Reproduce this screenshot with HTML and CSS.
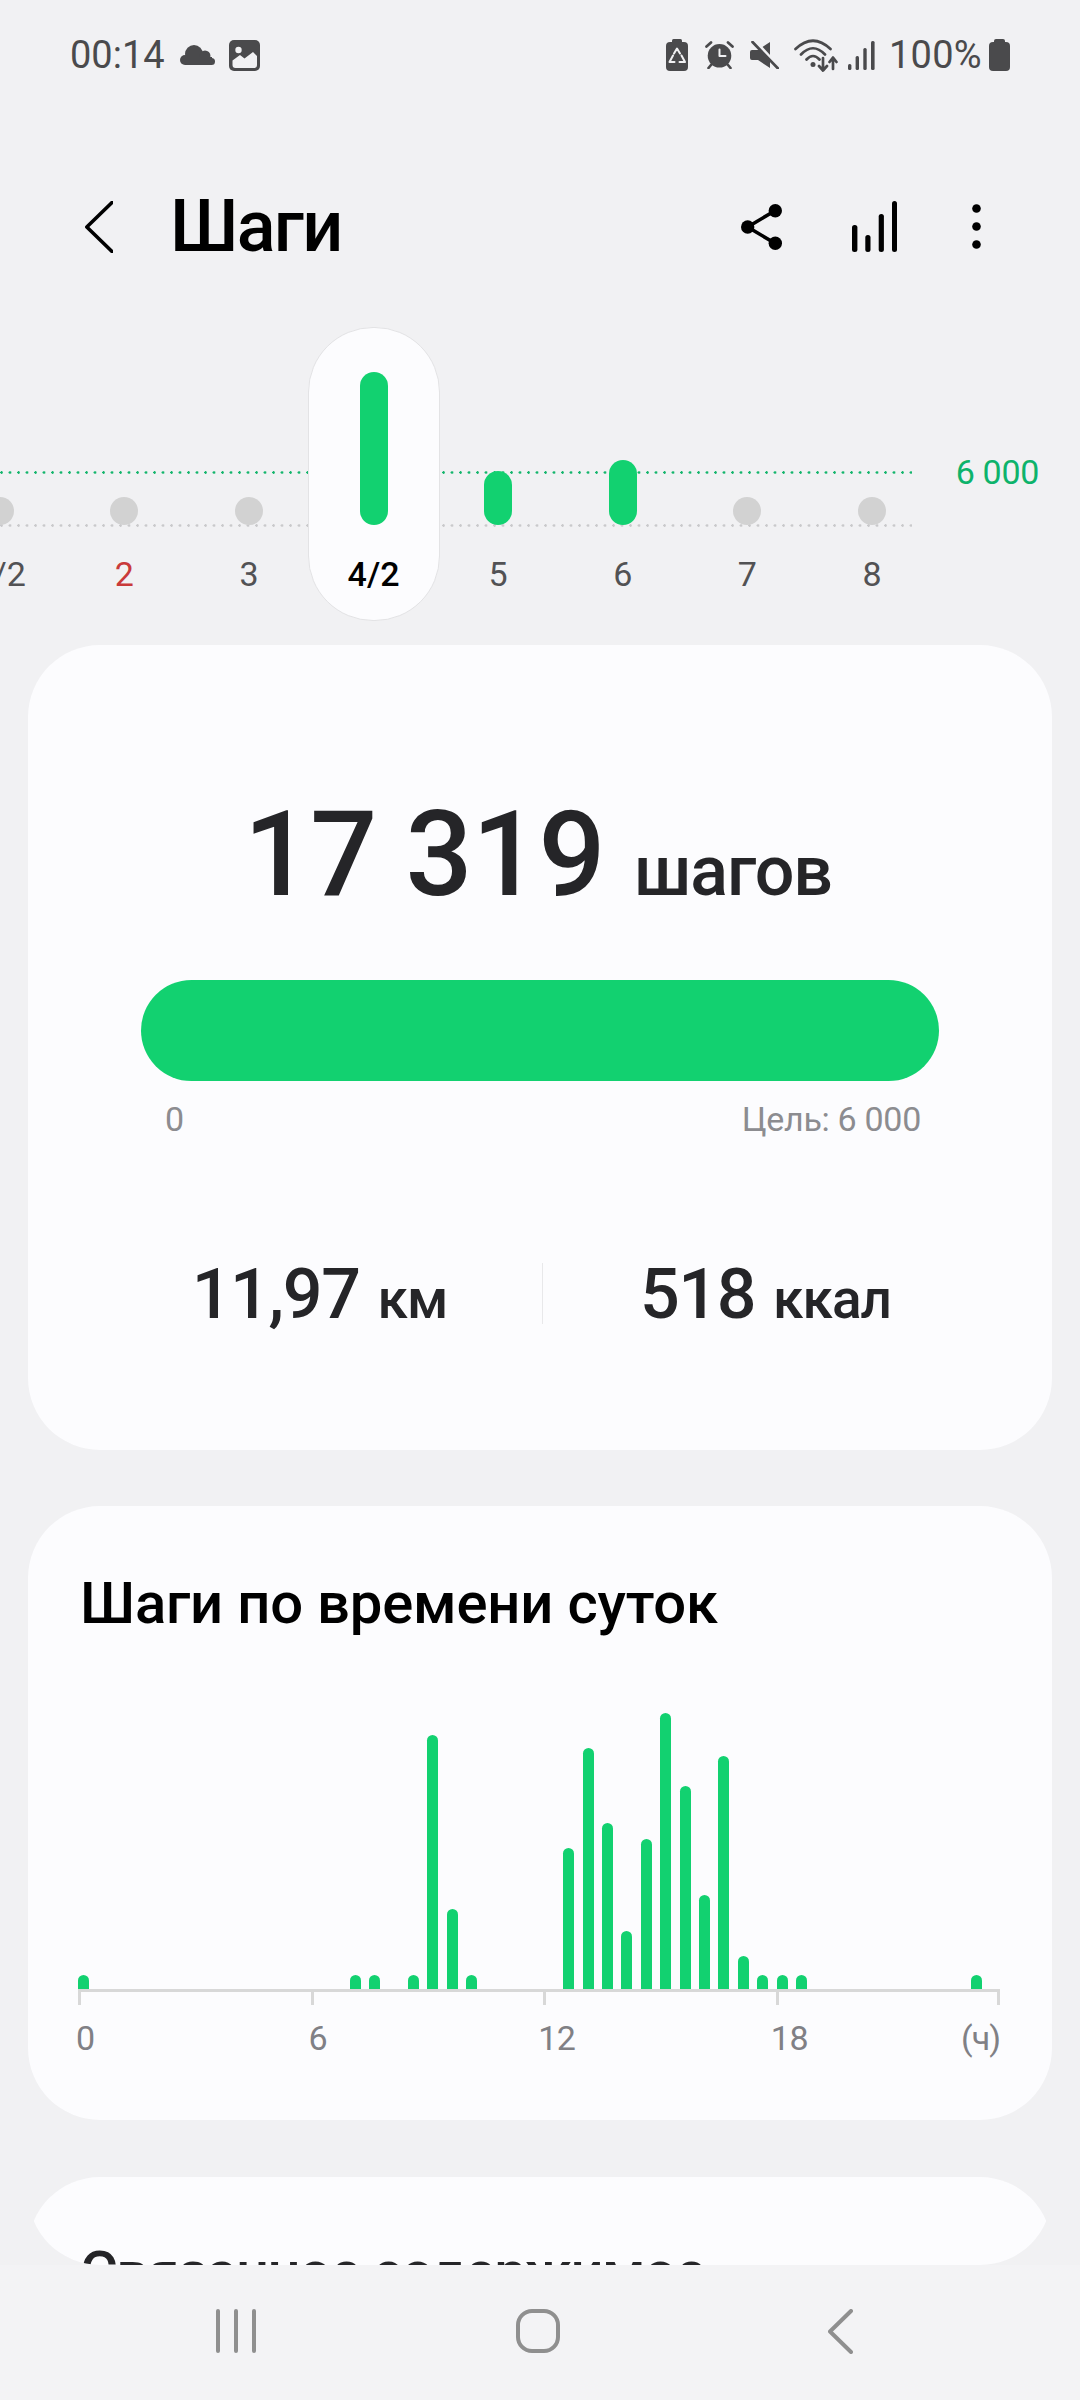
FILE: index.html
```html
<!DOCTYPE html>
<html lang="ru">
<head>
    <meta charset="UTF-8">
    <meta name="viewport" content="width=device-width, initial-scale=1.0">
    <title>Шаги</title>
    <link rel="stylesheet" href="styles.css">
</head>
<body>
    <div class="status-bar">
        <span class="status-time">00:14</span>
        <svg class="ic-cloud" viewBox="0 0 35 20"><circle cx="14" cy="9" r="9"/><circle cx="25" cy="11" r="5.5"/><circle cx="5" cy="15" r="5"/><circle cx="31.5" cy="16.5" r="3.5"/><rect x="5" y="12" width="27" height="8"/></svg>
        <svg class="ic-image" viewBox="0 0 31 31"><rect width="31" height="31" rx="5"/><circle class="cut" cx="9.5" cy="10" r="3.2"/><path class="cut" d="M3.5 20.5L11 15l4.5 3.5L24 12l4 4v9a3 3 0 0 1-3 3H6.500a3 3 0 0 1-3-3z"/></svg>
        <div class="status-right">
            <svg class="ic-recycle" viewBox="0 0 22 32"><rect y="3" width="22" height="29" rx="4"/><rect x="6" width="10" height="6" rx="1.500"/><path class="cut-line" d="M8 14.500l3-5 3 5M15.500 16.500l3.500 6.500h-5.500M8.500 23h-5L7 16.500"/></svg>
            <svg class="ic-alarm" viewBox="0 0 29 28"><circle cx="14.500" cy="14.800" r="11.800"/><path class="cut-line" d="M1 7l6-5.500M28 7l-6-5.500"/><path class="line" d="M1.500 5.500L6 1.500M27.500 5.500L23 1.500M6 24l-2.500 3M23 24l2.500 3"/><path class="cut-line" d="M14.500 8.500v6.500H20.500"/></svg>
            <svg class="ic-mute" viewBox="0 0 29 28"><path d="M0 11q0-2 2-2h6l12-8v26L8 19H2q-2 0-2-2z"/><path class="cut-line wide" d="M5 0l26 28"/><path class="line" d="M2.500 1l25.500 26.500"/></svg>
            <svg class="ic-wifi" viewBox="0 0 44 33"><path class="line" d="M1.500 10Q19-6.500 36.500 10M7 15.500Q19 3 31 15.500M12.500 20.500Q19 13.500 25.500 20.500M29 19v12M25 27l4 4.500 4-4.500M39 30V19M35.500 23l3.500-4.500 3.500 4.500"/><circle cx="19" cy="25.500" r="2.500"/></svg>
            <svg class="ic-signal" viewBox="0 0 27 29"><rect y="23" width="3.400" height="6" rx="1.500"/><rect x="7.600" y="15" width="3.400" height="14" rx="1.500"/><rect x="15.300" y="7" width="3.400" height="22" rx="1.500"/><rect x="23" width="3.600" height="29" rx="1.500"/></svg>
            <span class="status-level">100%</span>
            <svg class="ic-battery" viewBox="0 0 21 32"><rect y="3" width="21" height="29" rx="4"/><rect x="5" width="11" height="6" rx="2"/></svg>
        </div>
    </div>

    <div class="app-bar">
        <svg class="ic-back" viewBox="0 0 28 52"><path d="M27 1.500L1.800 26 27 50.500"/></svg>
        <h1 class="app-title">Шаги</h1>
        <svg class="ic-share" viewBox="0 0 41 46"><path d="M34 6.700L6.700 23 34 39.300"/><circle cx="6.700" cy="23" r="6.700"/><circle cx="34.300" cy="6.700" r="6.700"/><circle cx="34.300" cy="39.300" r="6.700"/></svg>
        <svg class="ic-stats" viewBox="0 0 45 51"><rect y="24" width="5.400" height="27" rx="2.500"/><rect x="13.300" y="34" width="5.200" height="17" rx="2.500"/><rect x="26.700" y="13" width="5.200" height="38" rx="2.500"/><rect x="40" width="5" height="51" rx="2.500"/></svg>
        <svg class="ic-more" viewBox="0 0 9 45"><circle cx="4.500" cy="4.500" r="4.300"/><circle cx="4.500" cy="22.500" r="4.300"/><circle cx="4.500" cy="40.500" r="4.300"/></svg>
    </div>

    <div class="week">
        <div class="week-line goal"></div>
        <div class="week-line base"></div>
        <div class="week-goal">6 000</div>
        <div class="days">
            <div class="day"><div class="day-bars"><div class="day-bar empty" style="height:28px"></div></div><div class="day-label">1/2</div></div>
            <div class="day"><div class="day-bars"><div class="day-bar empty" style="height:28px"></div></div><div class="day-label sunday">2</div></div>
            <div class="day"><div class="day-bars"><div class="day-bar empty" style="height:28px"></div></div><div class="day-label">3</div></div>
            <div class="day selected"><div class="day-bars"><div class="day-bar" style="height:153px"></div></div><div class="day-label">4/2</div></div>
            <div class="day"><div class="day-bars"><div class="day-bar" style="height:54px"></div></div><div class="day-label">5</div></div>
            <div class="day"><div class="day-bars"><div class="day-bar" style="height:65px"></div></div><div class="day-label">6</div></div>
            <div class="day"><div class="day-bars"><div class="day-bar empty" style="height:28px"></div></div><div class="day-label">7</div></div>
            <div class="day"><div class="day-bars"><div class="day-bar empty" style="height:28px"></div></div><div class="day-label">8</div></div>
        </div>
    </div>

    <div class="content">
        <div class="card summary">
            <div class="total">
                <span class="total-value">17 319</span>
                <span class="total-unit">шагов</span>
            </div>
            <div class="progress"></div>
            <div class="progress-labels">
                <span>0</span>
                <span>Цель: 6 000</span>
            </div>
            <div class="stats">
                <div class="stat"><span class="stat-value">11,97</span><span class="stat-unit">км</span></div>
                <div class="stat-divider"></div>
                <div class="stat"><span class="stat-value">518</span><span class="stat-unit">ккал</span></div>
            </div>
        </div>

        <div class="card hourly">
            <h2 class="card-title">Шаги по времени суток</h2>
            <div class="hours">
                <div class="slot"><div class="bar" style="height:14px"></div></div>
                <div class="slot"></div><div class="slot"></div><div class="slot"></div><div class="slot"></div>
                <div class="slot"></div><div class="slot"></div><div class="slot"></div><div class="slot"></div>
                <div class="slot"></div><div class="slot"></div><div class="slot"></div><div class="slot"></div>
                <div class="slot"></div>
                <div class="slot"><div class="bar" style="height:14px"></div></div>
                <div class="slot"><div class="bar" style="height:14px"></div></div>
                <div class="slot"></div>
                <div class="slot"><div class="bar" style="height:14px"></div></div>
                <div class="slot"><div class="bar" style="height:254px"></div></div>
                <div class="slot"><div class="bar" style="height:80px"></div></div>
                <div class="slot"><div class="bar" style="height:14px"></div></div>
                <div class="slot"></div><div class="slot"></div><div class="slot"></div><div class="slot"></div>
                <div class="slot"><div class="bar" style="height:141px"></div></div>
                <div class="slot"><div class="bar" style="height:241px"></div></div>
                <div class="slot"><div class="bar" style="height:166px"></div></div>
                <div class="slot"><div class="bar" style="height:58px"></div></div>
                <div class="slot"><div class="bar" style="height:150px"></div></div>
                <div class="slot"><div class="bar" style="height:276px"></div></div>
                <div class="slot"><div class="bar" style="height:203px"></div></div>
                <div class="slot"><div class="bar" style="height:94px"></div></div>
                <div class="slot"><div class="bar" style="height:233px"></div></div>
                <div class="slot"><div class="bar" style="height:33px"></div></div>
                <div class="slot"><div class="bar" style="height:14px"></div></div>
                <div class="slot"><div class="bar" style="height:14px"></div></div>
                <div class="slot"><div class="bar" style="height:14px"></div></div>
                <div class="slot"></div><div class="slot"></div><div class="slot"></div><div class="slot"></div>
                <div class="slot"></div><div class="slot"></div><div class="slot"></div><div class="slot"></div>
                <div class="slot"><div class="bar" style="height:14px"></div></div>
            </div>
            <div class="axis">
                <div class="axis-cell"><div class="tick"></div><span>0</span></div>
                <div class="axis-cell"><div class="tick"></div><span>6</span></div>
                <div class="axis-cell teen"><div class="tick"></div><span>12</span></div>
                <div class="axis-cell teen last"><div class="tick"></div><span>18</span></div>
                <div class="axis-cell end"><div class="tick"></div><span>(ч)</span></div>
            </div>
        </div>

        <div class="card related">
            <h2 class="card-title">Связанное содержимое</h2>
        </div>
    </div>

    <div class="nav-bar">
        <svg class="nav-recent" viewBox="0 0 40 44"><path d="M2 2v40M20 2v40M38 2v40"/></svg>
        <svg class="nav-home" viewBox="0 0 44 44"><rect x="2" y="2" width="40" height="40" rx="14"/></svg>
        <svg class="nav-back" viewBox="0 0 25 45"><path d="M23 2L2 22.500 23 43"/></svg>
    </div>
</body>
</html>
```

FILE: styles.css
```css
* {
    margin: 0;
    padding: 0;
    box-sizing: border-box;
}

body {
    width: 1080px;
    height: 2400px;
    overflow: hidden;
    background: #f1f1f3;
    font-family: Roboto, "Noto Sans", sans-serif;
    color: #252528;
}

svg {
    display: block;
    flex: none;
}

/* status bar */
.status-bar {
    height: 110px;
    padding: 0 70px 0 70px;
    display: flex;
    align-items: center;
    color: #4a4a4c;
    fill: #4a4a4c;
}

.status-time,
.status-level {
    font-size: 38px;
    line-height: 44px;
}

.status-right {
    margin-left: auto;
    display: flex;
    align-items: center;
}

.status-bar .cut { fill: #f1f1f3; }
.status-bar .line { fill: none; stroke: #4a4a4c; stroke-width: 2.7; stroke-linecap: round; stroke-linejoin: round; }
.status-bar .cut-line { fill: none; stroke: #f1f1f3; stroke-width: 2; stroke-linecap: round; stroke-linejoin: round; }
.status-bar .cut-line.wide { stroke-width: 3; }

.ic-cloud { width: 35px; height: 20px; margin-left: 15px; margin-top: -1px; }
.ic-image { width: 31px; height: 31px; margin-left: 14px; }
.ic-recycle { width: 22px; height: 32px; }
.ic-alarm { width: 29px; height: 28px; margin-left: 17px; }
.ic-mute { width: 29px; height: 28px; margin-left: 16px; }
.ic-wifi { width: 44px; height: 33px; margin-left: 15px; }
.ic-signal { width: 27px; height: 29px; margin-left: 10px; }
.status-level { margin-left: 14px; letter-spacing: 0.3px; }
.ic-battery { width: 21px; height: 32px; margin-left: 7px; }

/* app bar */
.app-bar {
    height: 217px;
    padding: 16px 99px 0 85px;
    display: flex;
    align-items: center;
}

.app-title {
    margin-left: 57px;
    margin-right: auto;
    font-size: 72px;
    font-weight: 500;
    letter-spacing: -1.700px;
    color: #000;
}

.ic-back { width: 28px; height: 52px; }
.ic-back path { fill: none; stroke: #000; stroke-width: 3.600; stroke-linecap: round; stroke-linejoin: round; }
.ic-share { width: 41px; height: 46px; }
.ic-share path { fill: none; stroke: #000; stroke-width: 3.600; }
.ic-stats { width: 45px; height: 51px; margin-left: 70px; }
.ic-more { width: 9px; height: 45px; margin-left: 75px; }

/* week strip */
.week {
    position: relative;
    height: 294px;
}

.week-line {
    position: absolute;
    left: 0;
    width: 912px;
    height: 3px;
    background-size: 8.500px 3px;
}

.week-line.goal {
    top: 144px;
    background-image: radial-gradient(circle at 1.500px 1.500px, #13b56c 1.100px, transparent 1.500px);
}

.week-line.base {
    top: 197px;
    background-image: radial-gradient(circle at 1.500px 1.500px, #c9c9cb 1.100px, transparent 1.500px);
}

.week-goal {
    position: absolute;
    right: 41px;
    top: 125px;
    font-size: 34px;
    line-height: 40px;
    letter-spacing: -0.3px;
    color: #0db36b;
}

.days {
    display: flex;
    margin-left: -62.500px;
}

.day {
    position: relative;
    flex: none;
    width: 124.600px;
    height: 294px;
    display: flex;
    flex-direction: column;
    align-items: center;
}

.day.selected::before {
    content: '';
    position: absolute;
    top: 0;
    bottom: 0;
    left: -3px;
    width: 130px;
    background: #fcfcfe;
    border: 1.500px solid #e3e3e5;
    border-radius: 65px;
}

.day-bars {
    position: relative;
    height: 198px;
    display: flex;
    align-items: flex-end;
}

.day-bar {
    width: 28px;
    background: #12d170;
    border-radius: 14px;
}

.day-bar.empty { background: #d2d2d2; }

.day-label {
    position: relative;
    margin-top: 29px;
    font-size: 34px;
    line-height: 40px;
    color: #525254;
    white-space: nowrap;
}

.day-label.sunday { color: #c93a3a; }
.day.selected .day-label { color: #000; font-weight: 500; }

/* cards */
.content {
    margin: 24px 28px 0;
    height: 1620px;
    overflow: hidden;
    border-radius: 0 0 72px 72px;
}

.card {
    background: #fcfcfe;
    border-radius: 72px;
    margin-bottom: 56px;
}

.summary {
    height: 805px;
    padding-top: 150px;
}

.total {
    display: flex;
    align-items: baseline;
    justify-content: center;
    gap: 29px;
    margin-left: -4px;
    line-height: 120px;
    height: 120px;
    color: #252528;
}

.total-value {
    font-size: 118px;
    font-weight: 500;
    letter-spacing: -0.600px;
}

.total-unit {
    font-size: 70px;
    font-weight: 500;
    letter-spacing: -1px;
}

.progress {
    margin: 65px 0 0 113px;
    width: 798px;
    height: 101px;
    background: #12d170;
    border-radius: 51px;
}

.progress-labels {
    margin: 18px 131px 0 137px;
    display: flex;
    justify-content: space-between;
    font-size: 34px;
    line-height: 40px;
    letter-spacing: -0.3px;
    color: #8c8c90;
}

.stats {
    margin-top: 124px;
    padding: 0 64px 0 69px;
    height: 61px;
    display: flex;
    align-items: center;
}

.stat {
    flex: 1;
    display: flex;
    align-items: baseline;
    justify-content: center;
    gap: 18px;
    white-space: nowrap;
    font-weight: 500;
}

.stat-value { font-size: 70px; letter-spacing: -1.400px; }
.stat-unit { font-size: 55px; letter-spacing: -1px; }

.stat-divider {
    width: 1px;
    height: 61px;
    background: #e8e8ea;
}

.hourly {
    height: 614px;
    margin-bottom: 57px;
    padding-top: 63px;
}

.card-title {
    margin-left: 52px;
    font-size: 58px;
    font-weight: 500;
    line-height: 68px;
    letter-spacing: -0.200px;
    color: #000;
}

.hours {
    margin: 0 0 0 50px;
    height: 352px;
    display: flex;
    align-items: flex-end;
}

.slot {
    flex: none;
    width: 19.417px;
}

.bar {
    width: 11px;
    background: #12d170;
    border-radius: 6px 6px 0 0;
}

.axis {
    margin-left: 50px;
    width: 922px;
    display: flex;
    border-top: 3px solid #d8d8d8;
    font-size: 34px;
    line-height: 40px;
    letter-spacing: -0.500px;
    color: #808085;
}

.axis-cell {
    flex: none;
    width: 232.600px;
    display: flex;
    flex-direction: column;
}

.axis-cell span { margin-left: -2px; }
.axis-cell.teen span { margin-left: -5px; }

.axis-cell.last {
    flex: 1;
    width: auto;
}

.axis-cell.end {
    width: 3px;
    align-items: flex-end;
    white-space: nowrap;
    letter-spacing: -1px;
}

.tick {
    width: 3px;
    height: 13px;
    margin-bottom: 13px;
    background: #d8d8d8;
}

.related {
    height: 300px;
    padding-top: 61px;
}

.related .card-title {
    color: #252528;
    letter-spacing: -1.600px;
}

/* navigation bar */
.nav-bar {
    height: 135px;
    padding: 44px 89px 0 85px;
    display: grid;
    grid-template-columns: repeat(3, 302px);
    justify-items: center;
    align-items: start;
    background: #f3f3f5;
}

.nav-bar path,
.nav-bar rect {
    fill: none;
    stroke: #8f8f8f;
    stroke-width: 4;
    stroke-linecap: round;
    stroke-linejoin: round;
}

.nav-recent { width: 40px; height: 44px; }
.nav-home { width: 44px; height: 44px; }
.nav-back { width: 25px; height: 45px; }
```
